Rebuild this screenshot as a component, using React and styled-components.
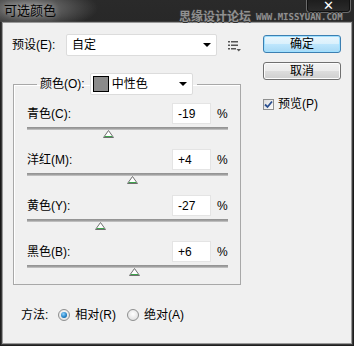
import React from "react";
import styled, { createGlobalStyle } from "styled-components";

const GlobalStyle = createGlobalStyle`
	html, body {
		margin: 0;
		padding: 0;
		background: #1b1b1b;
	}
	* {
		box-sizing: border-box;
	}
`;

const FONT = `"Liberation Sans", "Noto Sans CJK SC", sans-serif`;

const Window = styled.div`
	width: 354px;
	height: 346px;
	display: flex;
	flex-direction: column;
	background: linear-gradient(180deg, #2a2a2a 0%, #161616 60%, #1f1f1f 100%);
	font-family: ${FONT};
	font-size: 12px;
	color: #000;
	overflow: hidden;
`;

const TitleBar = styled.div`
	height: 22px;
	display: flex;
	align-items: flex-start;
	background: radial-gradient(ellipse 70px 22px at 28px 8px, #8d8d8d 0%, #5a5a5a 45%, rgba(40, 40, 40, 0) 100%);
`;

const Title = styled.span`
	flex-shrink: 0;
	padding: 3px 0 0 4px;
	font-size: 13px;
	line-height: 15px;
	color: #050505;
	text-shadow: 0 0 6px rgba(220, 220, 220, 0.7);
	width: 179px;
`;

const Watermark = styled.div`
	position: relative;
	z-index: 1;
	flex-shrink: 0;
	white-space: nowrap;
	display: flex;
	align-items: flex-end;
	gap: 5px;
	padding-top: 9px;
	color: #909090;
	text-shadow: 1px 0 0 #303030, -1px 0 0 #303030, 0 1px 0 #303030, 0 -1px 0 #303030;
	span:first-child {
		font-family: "Noto Sans CJK SC", sans-serif;
		font-size: 12px;
		line-height: 14px;
		font-weight: 700;
	}
	span:last-child {
		font-family: "DejaVu Sans Mono", monospace;
		font-size: 9px;
		line-height: 11px;
		font-weight: 700;
	}
`;

const CloseButton = styled.div`
	position: absolute;
	right: 3px;
	top: -3px;
	width: 45px;
	height: 16px;
	border: 1px solid #6b6b6b;
	border-top: none;
	border-radius: 0 0 4px 4px;
	background: linear-gradient(180deg, #1a1a1a, #2c2c2c);
	display: flex;
	align-items: center;
	justify-content: center;
	color: #fff;
	font-family: "DejaVu Sans", sans-serif;
	font-weight: 700;
	font-size: 13px;
	line-height: 13px;
	padding-top: 2px;
	box-shadow: inset 0 0 0 1px #111;
`;

const TitleWrap = styled.div`
	position: relative;
`;

const Body = styled.div`
	flex: 1;
	margin: 0 2px 2px 2px;
	border: 1px solid #9a9a9a;
	outline: 1px solid #3a3a3a;
	background: #f0f0f0;
	display: flex;
`;

const Main = styled.div`
	width: 256px;
	padding: 11px 0 0 9px;
	display: flex;
	flex-direction: column;
`;

const Side = styled.div`
	padding: 12px 0 0 4px;
	display: flex;
	flex-direction: column;
	gap: 9px;
`;

const PresetRow = styled.div`
	display: flex;
	align-items: center;
	height: 22px;
`;

const Label = styled.span`
	line-height: 16px;
	white-space: nowrap;
`;

const PresetLabel = styled(Label)`
	width: 54px;
`;

const Select = styled.div`
	width: ${p => p.$w}px;
	height: ${p => p.$h || 22}px;
	background: #fff;
	border: 1px solid #dcdcdc;
	border-radius: 2px;
	display: flex;
	align-items: center;
	padding-left: ${p => p.$pl || 5}px;
	padding-right: 5px;
	gap: 3px;
	span {
		flex: 1;
		line-height: 16px;
	}
`;

const Arrow = styled.i`
	width: 0;
	height: 0;
	border-left: 4px solid transparent;
	border-right: 4px solid transparent;
	border-top: 4px solid #000;
`;

const Swatch = styled.i`
	width: 16px;
	height: 16px;
	background: #8b8b8b;
	border: 1px solid #000;
`;

const MenuIcon = styled.svg`
	margin-left: 11px;
	margin-top: 2px;
`;

const Group = styled.fieldset`
	margin: 17px 0 0 1px;
	width: 228px;
	height: 212px;
	border: 1px solid #a8a8a8;
	box-shadow: inset 1px 1px 0 #fff;
	border-radius: 0;
	padding: 8px 0 0 13px;
	display: flex;
	flex-direction: column;
	gap: 5px;
`;

const Legend = styled.legend`
	margin-left: 10px;
	padding: 0 4px 0 3px;
	display: flex;
	align-items: center;
	gap: 5px;
`;

const Row = styled.div`
	display: flex;
	flex-direction: column;
	width: 201px;
`;

const RowHead = styled.div`
	display: flex;
	align-items: center;
	height: 21px;
`;

const RowLabel = styled(Label)`
	flex: 1;
`;

const Input = styled.div`
	width: 39px;
	height: 21px;
	background: #fff;
	border: 1px solid #e4e4e4;
	padding-left: 5px;
	display: flex;
	align-items: center;
	line-height: 16px;
`;

const Percent = styled.span`
	margin-left: 6px;
	width: 11px;
	line-height: 16px;
`;

const Slider = styled.div`
	position: relative;
	height: 20px;
	&::before {
		content: "";
		position: absolute;
		left: 0;
		right: 0;
		top: 3px;
		height: 3px;
		background: linear-gradient(180deg, #8f8f8f, #a3a3a3 60%, #d0d0d0);
	}
`;

const Thumb = styled.svg`
	position: absolute;
	top: 6px;
	margin-left: -5px;
`;

const MethodRow = styled.div`
	display: flex;
	align-items: center;
	margin: 22px 0 0 9px;
	height: 16px;
`;

const Radio = styled.label`
	display: flex;
	align-items: center;
	gap: 5px;
	margin-left: ${p => p.$ml}px;
	i {
		width: 12px;
		height: 12px;
		border-radius: 50%;
		border: 1px solid #8e8f8f;
		background: radial-gradient(circle at 50% 40%, #fff 0%, #e4e4e4 70%, #d0d0d0 100%);
		display: flex;
		align-items: center;
		justify-content: center;
	}
	i::after {
		content: "";
		width: 6px;
		height: 6px;
		border-radius: 50%;
		background: ${p => (p.$on ? "radial-gradient(circle at 40% 35%, #8fd3ff, #1f7ec2 60%, #0d4f86)" : "transparent")};
	}
`;

const Button = styled.div`
	width: 78px;
	height: 18px;
	border-radius: 3px;
	display: flex;
	align-items: center;
	justify-content: center;
	line-height: 16px;
	border: 1px solid ${p => (p.$primary ? "#3c7fb1" : "#707070")};
	background: ${p =>
		p.$primary
			? "linear-gradient(180deg, #eaf6fd 0%, #d9f0fc 50%, #bee6fd 51%, #a7d9f5 100%)"
			: "linear-gradient(180deg, #f2f2f2 0%, #ebebeb 50%, #dddddd 51%, #cfcfcf 100%)"};
	box-shadow: inset 0 0 0 1px ${p => (p.$primary ? "#9fe0ff" : "#fcfcfc")};
`;

const Check = styled.label`
	display: flex;
	align-items: center;
	gap: 4px;
	margin-top: 7px;
	i {
		width: 11px;
		height: 11px;
		border: 1px solid #8e8f8f;
		background: linear-gradient(135deg, #dcdcdc, #fbfbfb);
		display: flex;
		align-items: center;
		justify-content: center;
	}
`;

const channels = [
	{ label: "青色(C):", value: -19 },
	{ label: "洋红(M):", value: 4 },
	{ label: "黄色(Y):", value: -27 },
	{ label: "黑色(B):", value: 6 },
];

const fmt = v => (v > 0 ? `+${v}` : `${v}`);

const App = () => (
	<>
		<GlobalStyle />
		<Window>
			<TitleWrap>
				<TitleBar>
					<Title>可选颜色</Title>
					<Watermark>
						<span>思缘设计论坛</span>
						<span>WWW.MISSYUAN.COM</span>
					</Watermark>
				</TitleBar>
				<CloseButton>✕</CloseButton>
			</TitleWrap>
			<Body>
				<Main>
					<PresetRow>
						<PresetLabel>预设(E):</PresetLabel>
						<Select $w={151}>
							<span>自定</span>
							<Arrow />
						</Select>
						<MenuIcon width="14" height="12" viewBox="0 0 14 12">
							<g fill="#555">
								<rect x="0" y="1" width="2" height="1.5" />
								<rect x="3" y="1" width="7" height="1.5" />
								<rect x="0" y="4.5" width="2" height="1.5" />
								<rect x="3" y="4.5" width="7" height="1.5" />
								<rect x="0" y="8" width="2" height="1.5" />
								<rect x="3" y="8" width="5" height="1.5" />
								<path d="M8.5 9 L13 9 L10.75 11.5 Z" />
							</g>
						</MenuIcon>
					</PresetRow>
					<Group>
						<Legend>
							<Label>颜色(O):</Label>
							<Select $w={103} $pl={2}>
								<Swatch />
								<span>中性色</span>
								<Arrow />
							</Select>
						</Legend>
						{channels.map(c => (
							<Row key={c.label}>
								<RowHead>
									<RowLabel>{c.label}</RowLabel>
									<Input>{fmt(c.value)}</Input>
									<Percent>%</Percent>
								</RowHead>
								<Slider>
									<Thumb
										width="11"
										height="8"
										viewBox="0 0 11 8"
										style={{ left: `${((c.value + 100) / 200) * 100}%` }}
									>
										<path d="M5.5 0.5 L10.5 7.5 L0.5 7.5 Z" fill="#fff" stroke="#6e6e6e" />
										<path d="M2 6 L9 6 L9.5 7 L1.5 7 Z" fill="#3fa34d" />
									</Thumb>
								</Slider>
							</Row>
						))}
					</Group>
					<MethodRow>
						<Label>方法:</Label>
						<Radio $on $ml={10}>
							<i />
							<Label>相对(R)</Label>
						</Radio>
						<Radio $ml={11}>
							<i />
							<Label>绝对(A)</Label>
						</Radio>
					</MethodRow>
				</Main>
				<Side>
					<Button $primary>确定</Button>
					<Button>取消</Button>
					<Check>
						<i>
							<svg width="9" height="9" viewBox="0 0 9 9">
								<path d="M1 4.5 L3.5 7 L8 1.5" fill="none" stroke="#2a4f8f" strokeWidth="1.8" />
							</svg>
						</i>
						<Label>预览(P)</Label>
					</Check>
				</Side>
			</Body>
		</Window>
	</>
);

export default App;
